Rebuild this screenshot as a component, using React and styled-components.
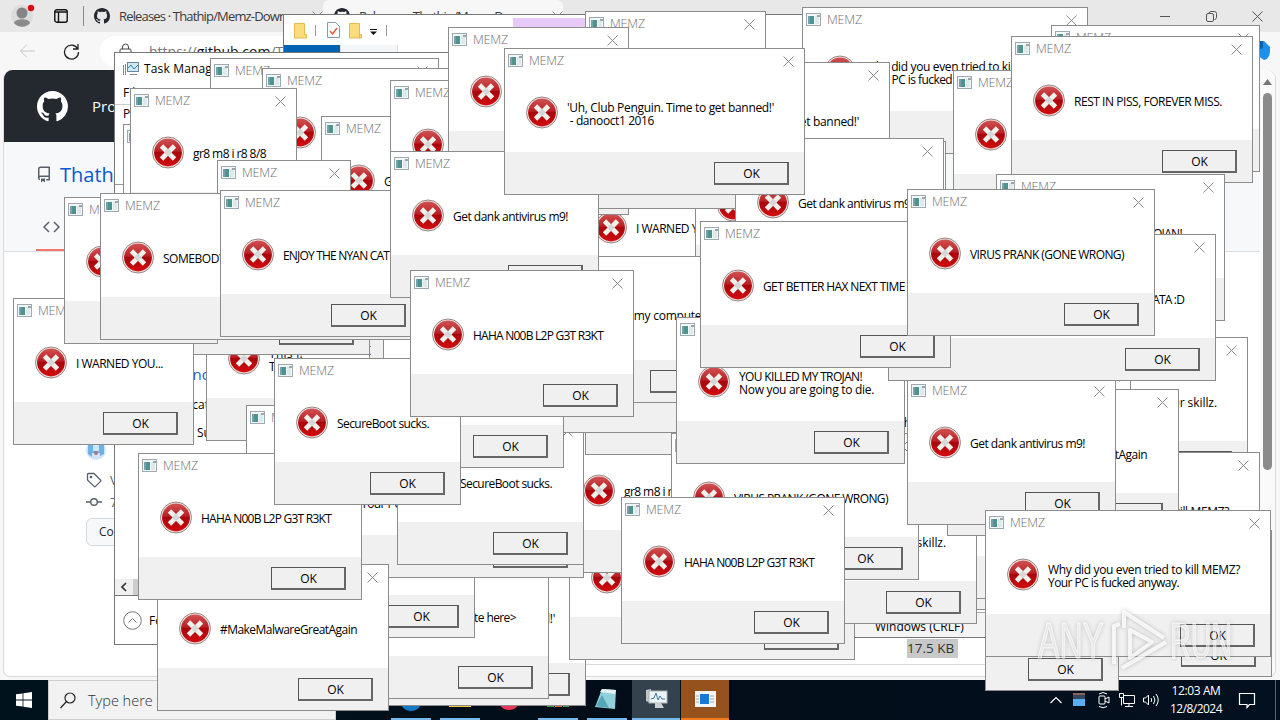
import React, { useLayoutEffect, useRef } from 'react';
import styled, { createGlobalStyle } from 'styled-components';

const GlobalStyle = createGlobalStyle`
	* {
		box-sizing: border-box;
	}
	body {
		margin: 0;
		overflow: hidden;
		font-family: 'Open Sans', 'Noto Sans', sans-serif;
	}
`;

const Desktop = styled.div`
	position: relative;
	width: 1280px;
	height: 720px;
	overflow: hidden;
	background: #f7f7f7;
	display: flex;
	flex-direction: column;
`;

/* ---------- text that always takes the same width ---------- */

const Line = styled.span`
	display: block;
	width: max-content;
	white-space: pre;
`;

const FitText = ({ width, children }) => {
	const ref = useRef(null);

	useLayoutEffect(() => {
		const el = ref.current;
		el.style.letterSpacing = '0px';
		const natural = el.getBoundingClientRect().width;
		el.style.letterSpacing = `${(width - natural) / children.length}px`;
	}, [width, children]);

	return <Line ref={ref}>{children}</Line>;
};

/* ---------- browser ---------- */

const TabStrip = styled.div`
	height: 32px;
	flex: none;
	display: flex;
	align-items: center;
	background: #e8e8e8;
	padding-left: 10px;
	color: #3b3b3b;
	font-size: 13px;
`;

const TabSvg = styled.svg`
	flex: none;
	margin-right: ${(props) => props.$gap || 0}px;
`;

const Divider = styled.div`
	width: 1px;
	height: 20px;
	background: #888;
	margin-right: 10px;
`;

const Tab = styled.div`
	width: ${(props) => props.$width}px;
	height: 32px;
	display: flex;
	align-items: center;
	gap: 9px;
	padding-left: ${(props) => props.$pad || 0}px;
	background: ${(props) => (props.$active ? '#f7f7f7' : 'transparent')};
	border-radius: 6px 6px 0 0;
	overflow: hidden;
`;

const TabTitle = styled.div`
	width: 168px;
	overflow: hidden;
`;

const WindowButtons = styled.div`
	margin-left: auto;
	display: flex;
	align-items: center;
	padding-right: 17px;
	gap: 35px;
`;

const Toolbar = styled.div`
	height: 38px;
	flex: none;
	display: flex;
	align-items: center;
	padding: 0 8px 0 19px;
	background: #f7f7f7;
`;

const Address = styled.div`
	flex: 1;
	height: 31px;
	display: flex;
	align-items: center;
	gap: 17px;
	padding-left: 19px;
	margin-right: 50px;
	border-radius: 16px;
	background: #fff;
	color: #777;
	font-size: 14px;
	b {
		font-weight: 400;
		color: #111;
	}
`;

const PageFrame = styled.div`
	height: 607px;
	flex: none;
	margin: 0 4px 0 3px;
	display: flex;
	border: 1px solid #d8dade;
	border-top: none;
	border-radius: 9px 9px 7px 7px;
	background: #fff;
	overflow: hidden;
`;

const Page = styled.div`
	flex: 1;
	display: flex;
	flex-direction: column;
`;

const GithubHeader = styled.div`
	height: 72px;
	display: flex;
	align-items: center;
	gap: 24px;
	padding-left: 33px;
	background: #24292f;
	color: #fff;
	font-size: 15px;
`;

const RepoHeader = styled.div`
	height: 110px;
	display: flex;
	flex-direction: column;
	background: #f6f8fa;
	border-bottom: 1px solid #d8dee4;
	padding: 17px 0 0 32px;
`;

const RepoName = styled.div`
	display: flex;
	align-items: center;
	gap: 8px;
	height: 30px;
	color: #0b57cf;
	font-size: 20px;
	font-weight: 500;
`;

const CodeTab = styled.div`
	width: 80px;
	height: 33px;
	margin-top: auto;
	padding-left: 7px;
	border-bottom: 2px solid #f5766b;
`;

const Release = styled.div`
	display: flex;
	flex-direction: column;
	gap: 6px;
	padding: 188px 0 0 82px;
	color: #57606a;
	font-size: 13px;
`;

const ReleaseRow = styled.div`
	display: flex;
	align-items: center;
	gap: 8px;
	height: ${(props) => props.$height || 16}px;
`;

const CompareButton = styled.div`
	width: 90px;
	height: 28px;
	margin-top: 8px;
	padding: 4px 0 0 12px;
	border: 1px solid #d5d8dc;
	border-radius: 6px;
	background: #f6f8fa;
	color: #24292f;
	font-size: 12px;
`;

const AssetSize = styled.div`
	width: 51px;
	height: 19px;
	flex: none;
	margin: 93px 0 0 903px;
	background: #c8c8c8;
	color: #333;
	font-size: 13.5px;
	line-height: 19px;
`;

const PageLine = styled.div`
	height: 1px;
	flex: none;
	margin: 6px 0 0 500px;
	background: #d8dade;
`;

const Scrollbar = styled.div`
	width: 15px;
	display: flex;
	flex-direction: column;
	align-items: center;
	padding-top: 9px;
	gap: 8px;
	background: #fafafa;
	border-radius: 0 9px 0 0;
`;

const ScrollThumb = styled.div`
	width: 9px;
	height: 377px;
	border-radius: 5px;
	background: #8b8b8b;
`;

/* ---------- other windows ---------- */

const AppWindow = styled.div`
	position: absolute;
	left: ${(props) => props.$x}px;
	top: ${(props) => props.$y}px;
	width: ${(props) => props.$w}px;
	height: ${(props) => props.$h}px;
	display: flex;
	flex-direction: column;
	border: 1px solid #777;
	background: #fff;
	overflow: hidden;
	font-size: 12px;
`;

const QuickAccess = styled.div`
	height: 30px;
	display: flex;
	align-items: center;
	padding-left: 9px;
`;

const SearchTools = styled.div`
	width: 90px;
	height: 27px;
	margin: 3px 0 0 121px;
	background: #e8caf8;
`;

const Ribbon = styled.div`
	height: 8px;
	display: flex;
`;

const RibbonTab = styled.div`
	width: 57px;
	height: 8px;
	background: ${(props) => (props.$file ? '#0063b1' : '#f5f6f7')};
	border-right: 1px solid #ddd;
`;

const AppTitle = styled.div`
	height: 31px;
	display: flex;
	align-items: center;
	gap: 4px;
	padding-left: 8px;
`;

const MenuRow = styled.div`
	height: ${(props) => (props.$line ? 21 : 20)}px;
	padding: 0 8px;
	border-bottom: 1px solid ${(props) => (props.$line ? '#ccc' : 'transparent')};
`;

const ProcessList = styled.div`
	flex: 1;
	display: flex;
	flex-direction: column;
	margin-top: 59px;
	padding: 123px 0 0 12px;
	border-top: 1px solid #999;
`;

const GroupName = styled.div`
	height: 32px;
	color: #2a5fc4;
	font-size: 15px;
`;

const Process = styled.div`
	height: 28px;
	padding-left: ${(props) => props.$indent}px;
`;

const HorizontalScroll = styled.div`
	height: 16px;
	display: flex;
	align-items: center;
	background: #f0f0f0;
	padding-left: 5px;
	gap: 6px;
`;

const HorizontalThumb = styled.div`
	width: 160px;
	height: 16px;
	background: #cdcdcd;
`;

const TaskFooter = styled.div`
	height: 49px;
	display: flex;
	align-items: center;
	gap: 7px;
	padding-left: 8px;
	border-top: 1px solid #777;
`;

const StatusBar = styled.div`
	height: 25px;
	margin-top: auto;
	padding: 5px 0 0 274px;
	border-top: 1px solid #aaa;
	background: #f4f4f4;
`;

/* ---------- message box ---------- */

const Box = styled.div`
	position: absolute;
	left: ${(props) => props.$x}px;
	top: ${(props) => props.$y}px;
	width: ${(props) => props.$w}px;
	height: 147px;
	display: flex;
	flex-direction: column;
	border: 1px solid #8c8c8c;
	background: #fff;
	overflow: hidden;
`;

const BoxTitle = styled.div`
	height: 24px;
	flex: none;
	display: flex;
	align-items: center;
	padding: 0 10px 1px 3px;
	gap: 5px;
	color: #707070;
	font-size: 12.5px;
	font-weight: 300;
`;

const CloseSvg = styled.svg`
	flex: none;
	margin-left: auto;
	margin-top: 1px;
`;

const BoxBody = styled.div`
	height: 79px;
	flex: none;
	display: flex;
	gap: 8px;
	padding: 23px 0 0 20px;
`;

const ErrorSvg = styled.svg`
	flex: none;
`;

const BoxText = styled.div`
	height: 34px;
	display: flex;
	flex-direction: column;
	justify-content: center;
	color: #000;
	font-size: 12px;
	line-height: 13px;
	padding-top: 1px;
`;

const BoxFooter = styled.div`
	flex: 1;
	display: flex;
	justify-content: flex-end;
	padding: 10px 15px 0 0;
	background: #f0f0f0;
`;

const OkButton = styled.div`
	width: 75px;
	height: 23px;
	flex: none;
	padding-left: 1px;
	border: 1px solid #555;
	border-right: 2px solid #666;
	border-bottom: 2px solid #666;
	background: #f0f0f0;
	color: #000;
	font-size: 12px;
	line-height: 21px;
	text-align: center;
`;

const WindowIcon = () => (
	<svg width="16" height="14" viewBox="0 0 16 14">
		<rect x="0.5" y="0.5" width="14" height="12" fill="#f3f7f8" stroke="#9eaab0" />
		<rect x="2" y="3" width="6" height="8" fill="#4f948c" />
		<rect x="2" y="3" width="2" height="8" fill="#7a9fae" />
		<rect x="9" y="3" width="4" height="8" fill="#dde9ea" />
		<rect x="11" y="2" width="3" height="2" fill="#9ba5aa" />
	</svg>
);

const ErrorIcon = () => (
	<ErrorSvg width="34" height="34" viewBox="-0.5 0 34 34">
		<defs>
			<linearGradient id="red" x1="0" y1="0" x2="0" y2="1">
				<stop offset="0" stopColor="#cf5252" />
				<stop offset="0.45" stopColor="#ba2026" />
				<stop offset="0.5" stopColor="#a8060c" />
				<stop offset="1" stopColor="#d40c10" />
			</linearGradient>
		</defs>
		<circle cx="16.5" cy="16.5" r="15.5" fill="#f3e9e6" stroke="#8d7775" strokeWidth="0.9" />
		<circle cx="16.5" cy="16.5" r="13.9" fill="url(#red)" />
		<path d="M10 10l13 13M23 10l-13 13" stroke="#f1f0ea" strokeWidth="4.8" />
		<path d="M14.5 14.5l4 4M18.5 14.5l-4 4" stroke="#d5d8d8" strokeWidth="4.4" />
	</ErrorSvg>
);

const CloseIcon = () => (
	<CloseSvg width="11" height="11" viewBox="0 0 11 11">
		<path d="M0.5 0.5l10 10M10.5 0.5l-10 10" stroke="#888" />
	</CloseSvg>
);

const MESSAGES = {
	club: { w: 301, lines: [["'Uh, Club Penguin. Time to get banned!'", 207], [' - danooct1 2016', 87]] },
	why: { w: 286, lines: [['Why did you even tried to kill MEMZ?', 192], ['Your PC is fucked anyway.', 131]] },
	trojan: { w: 229, lines: [['YOU KILLED MY TROJAN!', 123], ['Now you are going to die.', 135]] },
	rest: { w: 242, lines: [['REST IN PISS, FOREVER MISS.', 148]] },
	gr8: { w: 167, lines: [['gr8 m8 i r8 8/8', 73]] },
	dank: { w: 209, lines: [['Get dank antivirus m9!', 115]] },
	haha: { w: 224, lines: [['HAHA N00B L2P G3T R3KT', 130]] },
	boot: { w: 187, lines: [['SecureBoot sucks.', 92]] },
	warned: { w: 181, lines: [['I WARNED YOU...', 87]] },
	prank: { w: 248, lines: [['VIRUS PRANK (GONE WRONG)', 154]] },
	hax: { w: 251, lines: [['GET BETTER HAX NEXT TIME xD', 158]] },
	malware: { w: 232, lines: [['#MakeMalwareGreatAgain', 137]] },
	nyan: { w: 202, lines: [['ENJOY THE NYAN CAT', 106]] },
	skillz: { w: 218, lines: [['Get better h4x0r skillz.', 124]] },
	quote: { w: 204, lines: [['<Insert a quote here>', 108]] },
	somebody: { w: 400, lines: [['SOMEBODY ONCE TOLD ME THE MEMZ IS GONNA ROLL ME', 311]] },
	data: { w: 328, lines: [['HACKER! ENJOY BAN! SAY BYE TO YOUR DATA :D', 233]] },
	computer: { w: 311, lines: [['I see there is someone on my computer!', 216], ['right now.', 55]] },
	small: { w: 134, lines: [['lol', 16]] },
	medium: { w: 154, lines: [['u mad?', 40]] },
	wide: { w: 367, lines: [] },
	blank: { w: 200, lines: [] },
	thisIs: { w: 164, lines: [['This i!', 34], ['The end.', 50]] },
};

// back to front
const BOXES = [
	['why', 802, 7],
	['warned', 585, 11],
	['dank', 1051, 25],
	['dank', 953, 70],
	['warned', 573, 163],
	['hax', 695, 141],
	['trojan', 210, 58],
	['wide', 262, 68],
	['club', 589, 62],
	['gr8', 123, 124],
	['gr8', 130, 88],
	['dank', 321, 116],
	['blank', 390, 80],
	['warned', 448, 27],
	['dank', 735, 138],
	['rest', 1011, 36],
	['trojan', 996, 174],
	['small', 217, 160],
	['gr8', 249, 225],
	['thisIs', 206, 294],
	['trojan', 141, 208],
	['warned', 13, 298],
	['medium', 64, 197],
	['gr8', 246, 405],
	['club', 285, 559],
	['quote', 345, 552],
	['skillz', 257, 491],
	['why', 569, 513],
	['gr8', 561, 426],
	['why', 298, 431],
	['blank', 585, 308],
	['boot', 397, 418],
	['club', 540, 286],
	['computer', 430, 256],
	['warned', 383, 321],
	['somebody', 100, 193],
	['nyan', 220, 190],
	['dank', 390, 151],
	['skillz', 1030, 337],
	['club', 830, 363],
	['dank', 900, 463],
	['why', 974, 452],
	['skillz', 759, 477],
	['malware', 947, 389],
	['prank', 671, 433],
	['trojan', 676, 317],
	['dank', 907, 378],
	['data', 888, 234],
	['hax', 700, 221],
	['prank', 907, 189],
	['haha', 621, 497],
	['malware', 157, 564],
	['haha', 138, 453],
	['boot', 274, 358],
	['haha', 410, 270],
	['club', 504, 48],
	['why', 986, 530],
	['small', 985, 544],
	['why', 985, 510],
];

const MessageBox = ({ type, x, y }) => {
	const { w, lines } = MESSAGES[type];

	return (
		<Box $x={x} $y={y} $w={w}>
			<BoxTitle>
				<WindowIcon />
				<FitText width={35}>MEMZ</FitText>
				<CloseIcon />
			</BoxTitle>
			<BoxBody>
				<ErrorIcon />
				<BoxText>
					{lines.map(([text, width]) => (
						<FitText key={text} width={width}>
							{text}
						</FitText>
					))}
				</BoxText>
			</BoxBody>
			<BoxFooter>
				<OkButton>OK</OkButton>
			</BoxFooter>
		</Box>
	);
};

/* ---------- drawings ---------- */

const OctocatIcon = ({ size, color, gap }) => (
	<TabSvg $gap={gap} width={size} height={size} viewBox="0 0 16 16" fill={color}>
		<path d="M8 0C3.58 0 0 3.58 0 8c0 3.54 2.29 6.53 5.47 7.59.4.07.55-.17.55-.38 0-.19-.01-.82-.01-1.49-2.01.37-2.53-.49-2.69-.94-.09-.23-.48-.94-.82-1.13-.28-.15-.68-.52-.01-.53.63-.01 1.08.58 1.23.82.72 1.21 1.87.87 2.33.66.07-.52.28-.87.51-1.07-1.78-.2-3.64-.89-3.64-3.95 0-.87.31-1.59.82-2.15-.08-.2-.36-1.02.08-2.12 0 0 .67-.21 2.2.82.64-.18 1.32-.27 2-.27s1.36.09 2 .27c1.53-1.04 2.2-.82 2.2-.82.44 1.1.16 1.92.08 2.12.51.56.82 1.27.82 2.15 0 3.07-1.87 3.75-3.65 3.95.29.25.54.73.54 1.48 0 1.07-.01 1.93-.01 2.2 0 .21.15.46.55.38A8.01 8.01 0 0 0 16 8c0-4.42-3.58-8-8-8z" />
	</TabSvg>
);

const Folder = () => (
	<svg width="13" height="17" viewBox="0 0 13 17">
		<path d="M0.5 1.5h10v11h2v3.5h-12z" fill="#fbdc7c" stroke="#e4b94f" />
		<path d="M10.5 12v4" stroke="#e4b94f" />
	</svg>
);

/* ---------- taskbar ---------- */

const Taskbar = styled.div`
	height: 40px;
	margin-top: auto;
	flex: none;
	display: flex;
	background: linear-gradient(90deg, #00131c 0, #020d18 50%, #03101f 100%);
	color: #fff;
`;

const StartButton = styled.div`
	width: 48px;
	display: flex;
	align-items: center;
	justify-content: center;
`;

const SearchBox = styled.div`
	width: 288px;
	display: flex;
	align-items: center;
	gap: 12px;
	padding-left: 11px;
	background: #f2f2f2;
	border: 1px solid #ccc;
	color: #333;
	font-size: 14.5px;
	font-weight: 300;
`;

const TaskButtons = styled.div`
	display: flex;
	gap: 1px;
	margin-left: 51px;
`;

const TaskButton = styled.div`
	width: ${(props) => (props.$bg ? 48 : 40)}px;
	height: 40px;
	margin: 0 ${(props) => (props.$bg ? 0 : 4)}px;
	display: flex;
	align-items: center;
	justify-content: center;
	background: ${(props) => props.$bg || 'transparent'};
	border-bottom: 2px solid ${(props) => props.$line || '#76b9ed'};
`;

const Tray = styled.div`
	margin-left: auto;
	display: flex;
	align-items: center;
	gap: 6px;
	padding-right: 19px;
`;

const ShowDesktop = styled.div`
	width: 5px;
	border-left: 1px solid #5a6470;
`;

const Clock = styled.div`
	width: 60px;
	display: flex;
	flex-direction: column;
	align-items: center;
	font-size: 12px;
	line-height: 18px;
	margin-right: 6px;
`;

const Watermark = styled.svg`
	position: absolute;
	left: 1030px;
	top: 602px;
	font-family: 'Liberation Sans', sans-serif;
	filter: drop-shadow(0 0 2px rgba(90, 90, 90, 0.45));
`;

const Browser = () => (
	<>
		<TabStrip>
			<TabSvg $gap={19} width="25" height="26" viewBox="0 0 25 26">
				<circle cx="12" cy="13" r="11" fill="#dcdcdc" />
				<circle cx="12" cy="10" r="5.5" fill="#858585" />
				<path d="M4 20c1-5 15-5 16 0-4 5-12 5-16 0z" fill="#8b8b8b" />
				<circle cx="21" cy="5" r="3.2" fill="#d90b16" />
			</TabSvg>
			<TabSvg $gap={15} width="14" height="14" viewBox="0 0 14 14" fill="none" stroke="#111" strokeWidth="1.4">
				<rect x="0.8" y="0.8" width="12.4" height="12.4" rx="2" />
				<path d="M1 3h12M4.5 3v10" />
			</TabSvg>
			<Divider />
			<Tab $width={229}>
				<OctocatIcon size={16} color="#24292f" />
				<TabTitle>
					<FitText width={183}>Releases · Thathip/Memz-Downloa</FitText>
				</TabTitle>
				<CloseIcon />
			</Tab>
			<Tab $active $width={240} $pad={11}>
				<OctocatIcon size={16} color="#24292f" />
				<TabTitle>
					<FitText width={183}>Releases · Thathip/Memz-Downloa</FitText>
				</TabTitle>
				<CloseIcon />
			</Tab>
			<WindowButtons>
				<svg width="11" height="11" viewBox="0 0 11 11">
					<path d="M0 5.5h10" stroke="#555" />
				</svg>
				<svg width="11" height="11" viewBox="0 0 11 11" fill="none" stroke="#555">
					<rect x="0.5" y="2.5" width="7" height="8" rx="1.5" />
					<path d="M3 2.5Q3 0.5 5 0.5h3.5q2 0 2 2v4q0 1.5-2 2" />
				</svg>
				<svg width="11" height="11" viewBox="0 0 11 11">
					<path d="M0.5 0.5l10 10M10.5 0.5l-10 10" stroke="#555" />
				</svg>
			</WindowButtons>
		</TabStrip>
		<Toolbar>
			<TabSvg $gap={27} width="17" height="16" viewBox="0 0 17 16" fill="none" stroke="#c6c6c6">
				<path d="M16 8H1.5M8 1.5L1.5 8L8 14.5" />
			</TabSvg>
			<TabSvg $gap={20} width="17" height="17" viewBox="0 0 17 17" fill="none" stroke="#222" strokeWidth="1.3">
				<path d="M14.5 5.5A7 7 0 1 0 15.5 9M15 1v5h-5" />
			</TabSvg>
			<Address>
				<svg width="13" height="17" viewBox="0 0 13 17" fill="none" stroke="#444">
					<rect x="1" y="6" width="11" height="9" rx="1" />
					<path d="M3.5 6V4a3 3 0 0 1 6 0v2" />
				</svg>
				<span>
					https://<b>github.com</b>/Thathip
				</span>
			</Address>
			<svg width="16" height="24" viewBox="0 0 16 24">
				<path d="M1 2h7l6 6q1 12-6 13l-7-5z" fill="#1d8ff0" />
				<path d="M1 2h6v7l-6 3z" fill="#0b62a8" />
			</svg>
		</Toolbar>
		<PageFrame>
			<Page>
				<GithubHeader>
					<OctocatIcon size={31} color="#fff" />
					Product
				</GithubHeader>
				<RepoHeader>
					<RepoName>
						<svg width="16" height="17" viewBox="0 0 16 16" fill="#57606a">
							<path d="M2 2.5A2.5 2.5 0 0 1 4.5 0h8.75a.75.75 0 0 1 .75.75v12.5a.75.75 0 0 1-.75.75h-2.5a.75.75 0 0 1 0-1.5h1.75v-2h-8a1 1 0 0 0-.714 1.7.75.75 0 1 1-1.072 1.05A2.495 2.495 0 0 1 2 11.5zm10.5-1h-8a1 1 0 0 0-1 1v6.708A2.486 2.486 0 0 1 4.5 9h8zM5 12.25a.25.25 0 0 1 .25-.25h3.5a.25.25 0 0 1 .25.25v3.25a.25.25 0 0 1-.4.2l-1.45-1.087a.249.249 0 0 0-.3 0L5.4 15.7a.25.25 0 0 1-.4-.2z" />
						</svg>
						Thathip
					</RepoName>
					<CodeTab>
						<svg width="17" height="16" viewBox="0 0 17 16" fill="none" stroke="#57606a" strokeWidth="1.5">
							<path d="M6 3L1 8l5 5M11 3l5 5l-5 5" />
						</svg>
					</CodeTab>
				</RepoHeader>
				<Release>
					<ReleaseRow $height={20}>
						<svg width="20" height="20" viewBox="0 0 20 20">
							<circle cx="10" cy="10" r="10" fill="#cfe4f5" />
							<path d="M2 4h5v7h6V4h5v10l-4 2v-3H6v4l-4-3z" fill="#6fb1e4" />
							<circle cx="10" cy="13" r="2" fill="#a0798c" />
						</svg>
						Thathip
					</ReleaseRow>
					<ReleaseRow $height={28}>
						<svg width="16" height="16" viewBox="0 0 16 16" fill="none" stroke="#57606a" strokeWidth="1.3">
							<path d="M1.5 2.5q0-1 1-1h5.5l6.5 6.5q.7.7 0 1.4l-5 5q-.7.7-1.4 0L1.5 8z" />
							<circle cx="5" cy="5" r="0.7" />
						</svg>
						V1.0
					</ReleaseRow>
					<ReleaseRow $height={4}>
						<svg width="16" height="16" viewBox="0 0 16 16" fill="none" stroke="#57606a" strokeWidth="1.4">
							<circle cx="8" cy="8" r="3.3" />
							<path d="M0 8h4.5M11.5 8H16" />
						</svg>
						7a1
					</ReleaseRow>
					<CompareButton>Compare</CompareButton>
				</Release>
				<AssetSize>17.5 KB</AssetSize>
				<PageLine />
			</Page>
			<Scrollbar>
				<svg width="9" height="6" viewBox="0 0 9 6">
					<path d="M0 6L4.5 0L9 6z" fill="#777" />
				</svg>
				<ScrollThumb />
			</Scrollbar>
		</PageFrame>
	</>
);

const App = () => {
	return (
		<>
			<GlobalStyle />
			<Desktop>
				<Browser />
				<Taskbar>
					<StartButton>
						<svg width="16" height="16" viewBox="0 0 16 16" fill="#fff">
							<path d="M0 2.3l6.6-.9v6.1H0zM7.4 1.3L16 0v7.5H7.4zM0 8.4h6.6v6.2L0 13.7zM7.4 8.4H16V16l-8.6-1.2z" />
						</svg>
					</StartButton>
					<SearchBox>
						<svg width="16" height="17" viewBox="0 0 16 17" fill="none" stroke="#222" strokeWidth="1.2">
							<circle cx="10" cy="6" r="5" />
							<path d="M6.5 9.5L0.5 16" />
						</svg>
						Type here to search
					</SearchBox>
					<TaskButtons>
						<TaskButton>
							<svg width="22" height="26" viewBox="0 0 22 26">
								<circle cx="11" cy="14" r="11" fill="#1579c8" />
							</svg>
						</TaskButton>
						<TaskButton>
							<svg width="22" height="24" viewBox="0 0 22 24">
								<path d="M0 4h22v16H0z" fill="#f5c63c" />
							</svg>
						</TaskButton>
						<TaskButton $line="transparent">
							<svg width="22" height="26" viewBox="0 0 22 26">
								<circle cx="11" cy="13" r="11" fill="#f0355a" />
							</svg>
						</TaskButton>
						<TaskButton>
							<svg width="22" height="24" viewBox="0 0 22 24">
								<path d="M0 4h7v16H0z" fill="#3f9b48" />
								<path d="M8 4h7v16H8z" fill="#d8642a" />
								<path d="M16 4h6v16h-6z" fill="#3f9b48" />
							</svg>
						</TaskButton>
						<TaskButton>
							<svg width="26" height="24" viewBox="0 0 26 24">
								<path d="M8 2l14 1l-1 19l-20-2z" fill="#8fd0dc" />
								<path d="M8 2l14 1l-1 4L6 5z" fill="#e3f1f3" />
								<path d="M8 8l-6 11l13 2z" fill="#54a7b8" />
							</svg>
						</TaskButton>
						<TaskButton $bg="#33424c">
							<svg width="24" height="24" viewBox="0 0 24 24">
								<path d="M2 3l5-1v14l-5-2z" fill="#bfc5c8" />
								<rect x="5" y="4" width="18" height="12" fill="#eef3f5" stroke="#aab4b8" />
								<path d="M7 12l3-1l2-5l2 7l2-4l2 3h3" fill="none" stroke="#3b78a8" />
								<path d="M11 16h6l3 5h-9z" fill="#cdd2d4" />
							</svg>
						</TaskButton>
						<TaskButton $bg="#95521c" $line="#f07a1c">
							<svg width="21" height="17" viewBox="0 0 21 17">
								<rect width="21" height="16" fill="#f2f5f8" />
								<rect x="5" y="3" width="9" height="10" fill="#1479d8" />
								<path d="M15 5h4M15 8h4M15 11h4M1 5h3M1 8h3M1 11h3" stroke="#9ab" />
							</svg>
						</TaskButton>
					</TaskButtons>
					<Tray>
						<svg width="18" height="14" viewBox="0 0 18 14" fill="none" stroke="#fff" strokeWidth="1.2">
							<path d="M2.5 10L8 4.500L13.5 10" />
						</svg>
						<svg width="16" height="14" viewBox="0 0 16 14">
							<rect x="1" width="12" height="13" fill="#58aef0" />
							<rect x="1" width="12" height="6" fill="#33475a" />
							<path d="M1 1h12" stroke="#d8865d" />
						</svg>
						<svg width="18" height="18" viewBox="0 0 18 18" fill="none" stroke="#fff">
							<rect x="5" y="5" width="6" height="8" rx="1" />
							<path d="M11 8l4-2v6l-4-2M5 3q4-3 8 0M5 15.5q4 2.5 8 0" />
						</svg>
						<svg width="18" height="16" viewBox="0 0 18 16" fill="none" stroke="#fff">
							<path d="M5.5 3.5h11v8h-11zM7 14.5h8M11 11.5v3M1.5 1.5h4v4h-4zM3.5 5.5v8" />
						</svg>
						<svg width="18" height="16" viewBox="0 0 18 16" fill="none" stroke="#fff">
							<path d="M1.5 6h2l3-3v10l-3-3h-2zM9 6q1.5 2 0 4M11.5 4q3 4 0 8M14 2q4.5 6 0 12" />
						</svg>
						<Clock>
							<FitText width={49}>12:03 AM</FitText>
							<FitText width={52}>12/8/2024</FitText>
						</Clock>
						<svg width="18" height="18" viewBox="0 0 18 18" fill="none" stroke="#fff" strokeWidth="1.2">
							<path d="M1.5 2.5h15v11h-5l-2.5 3v-3h-7.5z" />
						</svg>
					</Tray>
					<ShowDesktop />
				</Taskbar>

				<AppWindow $x={600} $y={430} $w={400} $h={208}>
					<StatusBar>Windows (CRLF)</StatusBar>
				</AppWindow>

				<AppWindow $x={283} $y={14} $w={620} $h={500}>
					<QuickAccess>
						<TabSvg $gap={10} width="24" height="17" viewBox="0 0 24 17">
							<path d="M1.5 1.5h10v11h2v3.5h-12z" fill="#fbdc7c" stroke="#e4b94f" />
							<path d="M22.5 3v11" stroke="#999" />
						</TabSvg>
						<TabSvg $gap={9} width="13" height="17" viewBox="0 0 13 17" fill="none">
							<path d="M0.5 0.5h8l4 4v11h-12z" fill="#fff" stroke="#8899aa" />
							<path d="M3 9l2.5 3L10 6" stroke="#e2603c" strokeWidth="1.5" />
						</TabSvg>
						<Folder />
						<TabSvg width="30" height="17" viewBox="0 0 30 17">
							<path d="M8 7.5h7" stroke="#111" />
							<path d="M8 9.5h7l-3.5 3.5z" fill="#111" />
							<path d="M24.5 3v11" stroke="#999" />
						</TabSvg>
						<SearchTools />
					</QuickAccess>
					<Ribbon>
						<RibbonTab $file />
						<RibbonTab />
					</Ribbon>
				</AppWindow>

				<AppWindow $x={114} $y={52} $w={460} $h={593}>
					<AppTitle>
						<svg width="17" height="16" viewBox="0 0 17 16">
							<path d="M0.5 4v10M2.5 3v11" stroke="#888" />
							<rect x="4.5" y="1.5" width="11" height="9" fill="#cfe9f7" stroke="#6c8798" />
							<path d="M5 7l3-3l3 4l4-4" fill="none" stroke="#2f7fb0" />
							<path d="M7 13.5h7" stroke="#888" />
						</svg>
						<FitText width={80}>Task Manager</FitText>
					</AppTitle>
					<MenuRow $line>File   Options   View</MenuRow>
					<MenuRow>Processes</MenuRow>
					<ProcessList>
						<Process $indent={0} />
						<Process $indent={0} />
						<GroupName>Background</GroupName>
						<Process $indent={37}>Application</Process>
						<Process $indent={70}>Su</Process>
					</ProcessList>
					<HorizontalScroll>
						<svg width="7" height="10" viewBox="0 0 7 10">
							<path d="M6 1L2 5l4 4" fill="none" stroke="#333" strokeWidth="1.7" />
						</svg>
						<HorizontalThumb />
					</HorizontalScroll>
					<TaskFooter>
						<svg width="19" height="19" viewBox="0 0 19 19" fill="none" stroke="#777">
							<circle cx="9.5" cy="9.5" r="8.8" />
							<path d="M5.5 11.5l4-4l4 4" />
						</svg>
						Fewer details
					</TaskFooter>
				</AppWindow>

				{BOXES.map(([type, x, y]) => (
					<MessageBox key={`${x}-${y}`} type={type} x={x} y={y} />
				))}

				<Watermark width="210" height="74" viewBox="0 0 210 74">
					<g fill="#fff" fillOpacity="0.5" stroke="#fff" strokeOpacity="0.75" fontSize="50">
						<text x="8" y="56" textLength="66" lengthAdjust="spacingAndGlyphs">
							ANY
						</text>
						<text x="140" y="56" textLength="62" lengthAdjust="spacingAndGlyphs">
							RUN
						</text>
					</g>
					<g fill="none" stroke="#fff" strokeOpacity="0.8" strokeWidth="4" strokeLinejoin="round">
						<path d="M84 62V24l6-2M94 26V10L134 36M100 28L122 40L100 56zM92 66L136 40" />
					</g>
				</Watermark>
			</Desktop>
		</>
	);
};

export default App;
